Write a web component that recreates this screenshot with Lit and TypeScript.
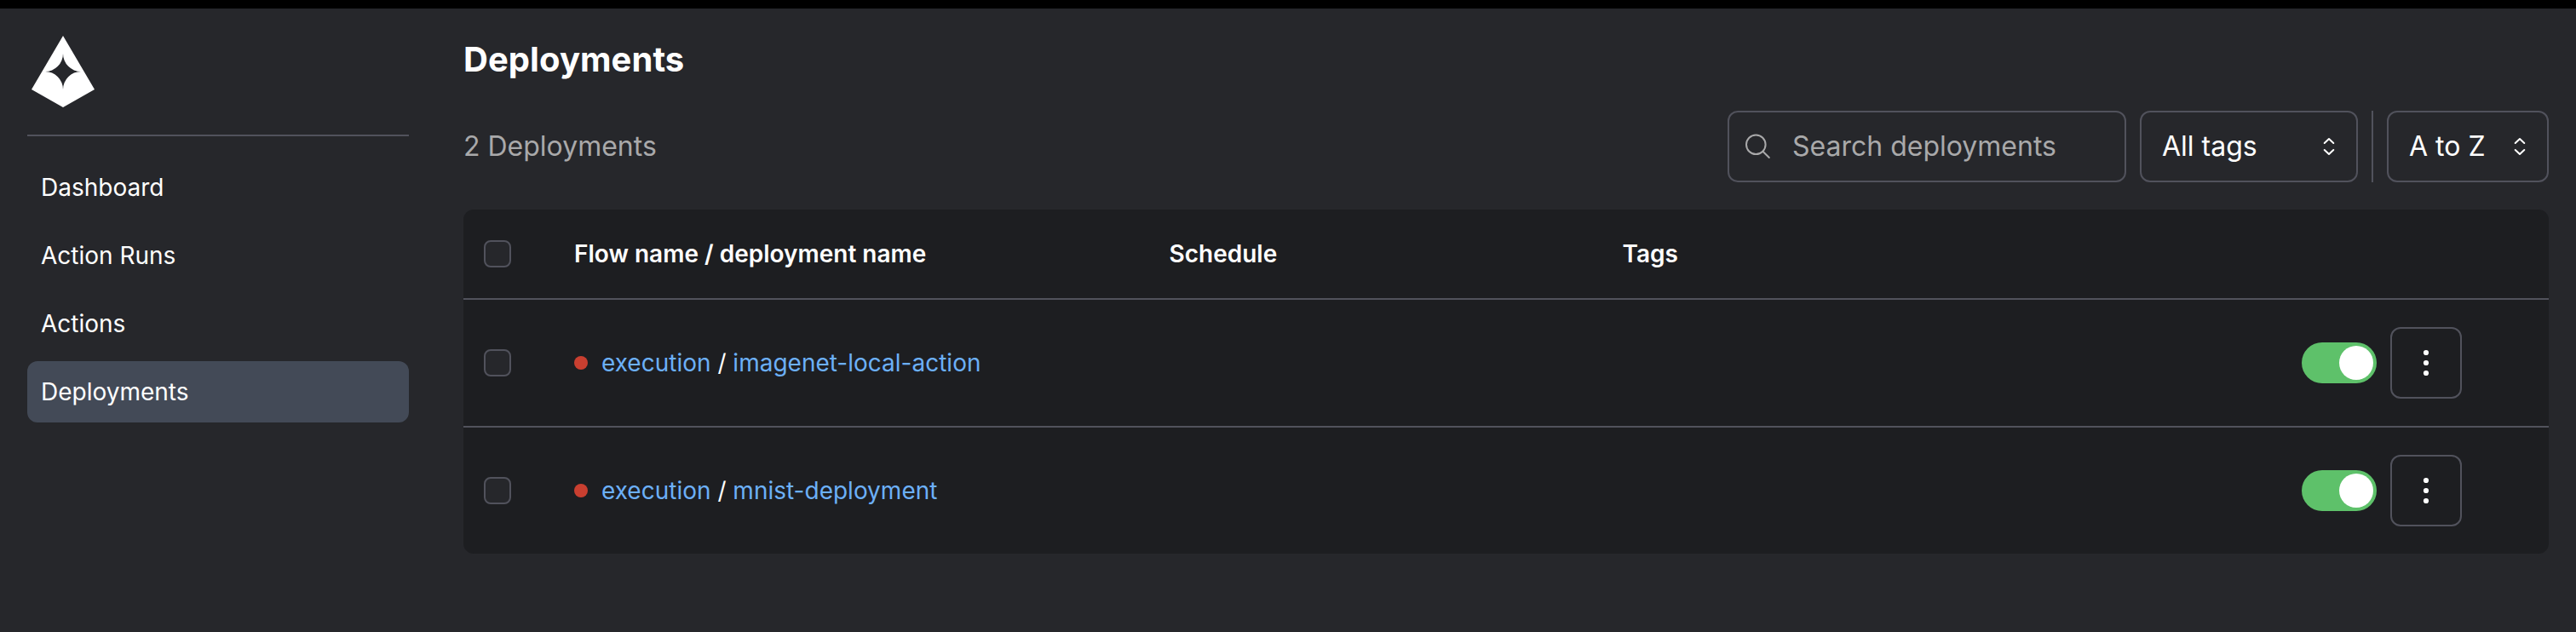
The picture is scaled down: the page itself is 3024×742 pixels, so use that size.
import { LitElement, html, css, svg } from "lit";
import { customElement, property } from "lit/decorators.js";

@customElement("app-checkbox")
class AppCheckbox extends LitElement {
  static styles = css`
    :host {
      display: block;
      box-sizing: border-box;
      width: 32px;
      height: 32px;
      border: 2px solid #51525c;
      border-radius: 8px;
      background: #26272b;
    }
  `;
  render() {
    return html``;
  }
}

@customElement("app-select")
class AppSelect extends LitElement {
  @property() label = "";
  static styles = css`
    :host {
      display: flex;
      box-sizing: border-box;
      align-items: center;
      justify-content: space-between;
      height: 84px;
      padding: 0 20px 0 24px;
      border: 2px solid #51525c;
      border-radius: 12px;
      color: #fff;
      font-size: 32px;
      line-height: 48px;
      white-space: nowrap;
    }
    svg {
      display: block;
      width: 24px;
      height: 24px;
    }
  `;
  render() {
    return html`<span>${this.label}</span>
      <svg viewBox="0 0 24 24" fill="none" stroke="#fff" stroke-width="2" stroke-linecap="round" stroke-linejoin="round">
        <path d="M6.7 8L12 3l5.3 5M6.7 16l5.3 5 5.3-5" />
      </svg>`;
  }
}

@customElement("app-sidebar")
class AppSidebar extends LitElement {
  static styles = css`
    :host {
      display: block;
      box-sizing: border-box;
      width: 512px;
      padding: 32px;
    }
    .brand {
      display: flex;
      height: 116px;
      padding-left: 5px;
      border-bottom: 2px solid #51525c;
    }
    .brand svg {
      display: block;
      width: 74px;
      height: 84px;
    }
    nav {
      display: flex;
      flex-direction: column;
      gap: 8px;
      margin-top: 24px;
    }
    a {
      padding: 0 16px;
      border-radius: 12px;
      color: #fff;
      font-size: 28px;
      line-height: 72px;
    }
    a.active {
      background: #434a57;
    }
  `;
  render() {
    const items = ["Dashboard", "Action Runs", "Actions", "Deployments"];
    return html`
      <div class="brand">
        <svg viewBox="0 0 74 84" fill="#fff" fill-rule="evenodd">
          <path d="M37 0L74 63L37 84L0 63ZM37 21A21 21 0 0 1 16 42A21 21 0 0 1 37 63A21 21 0 0 1 58 42A21 21 0 0 1 37 21Z" />
        </svg>
      </div>
      <nav>
        ${items.map((item) => html`<a class=${item === "Deployments" ? "active" : ""}>${item}</a>`)}
      </nav>
    `;
  }
}

@customElement("app-root")
class AppRoot extends LitElement {
  static styles = css`
    :host {
      display: flex;
      box-sizing: border-box;
      width: 100%;
      height: 742px;
      border-top: 10px solid #000;
      background: #26272b;
      color: #fff;
      font-family: Inter, sans-serif;
      overflow: hidden;
    }
    main {
      flex: 1;
      padding: 32px 32px 0;
    }
    h1 {
      margin: 0;
      font-size: 40px;
      font-weight: 700;
      line-height: 56px;
      letter-spacing: 0.06px;
    }
    .toolbar {
      display: flex;
      align-items: center;
      gap: 16px;
      margin-top: 32px;
    }
    .count {
      flex: 1;
      color: #a9a9aa;
      font-size: 32px;
      line-height: 48px;
    }
    .search {
      display: flex;
      box-sizing: border-box;
      align-items: center;
      gap: 24px;
      width: 468px;
      height: 84px;
      padding: 0 14px;
      border: 2px solid #51525c;
      border-radius: 12px;
      color: #a9a9aa;
      font-size: 32px;
      line-height: 48px;
    }
    .search svg {
      display: block;
      width: 36px;
      height: 36px;
    }
    .tags {
      width: 256px;
    }
    .sort {
      width: 190px;
    }
    .divider {
      width: 2px;
      height: 84px;
      background: #51525c;
    }
    .table {
      margin-top: 32px;
      border-radius: 12px;
      background: #1d1e21;
      font-size: 28px;
      line-height: 40px;
    }
    .row {
      display: grid;
      grid-template-columns: 106px 698.5px 532px 797.5px 1fr;
      align-items: center;
      height: 148px;
      padding-left: 24px;
      border-top: 2px solid #51525c;
    }
    .head {
      height: 104px;
      border-top: 0;
      font-weight: 600;
    }
    .name {
      display: flex;
      align-items: center;
      gap: 8px;
    }
    .dot {
      width: 16px;
      height: 16px;
      margin-right: 8px;
      border-radius: 50%;
      background: #c93f30;
    }
    .link {
      color: #6cb0f8;
    }
    .actions {
      display: flex;
      grid-column: 5;
      align-items: center;
      gap: 16px;
    }
    .toggle {
      display: flex;
      box-sizing: border-box;
      justify-content: flex-end;
      width: 88px;
      height: 48px;
      padding: 4px;
      border-radius: 24px;
      background: #5ec16a;
    }
    .knob {
      width: 40px;
      height: 40px;
      border-radius: 50%;
      background: #fff;
    }
    .more {
      display: flex;
      box-sizing: border-box;
      align-items: center;
      justify-content: center;
      width: 84px;
      height: 84px;
      border: 2px solid #51525c;
      border-radius: 12px;
    }
    .more svg {
      display: block;
      width: 40px;
      height: 40px;
    }
  `;

  private row(name: string) {
    return html`
      <div class="row">
        <app-checkbox></app-checkbox>
        <div class="name">
          <span class="dot"></span>
          <span><span class="link">execution</span> / <span class="link">${name}</span></span>
        </div>
        <div class="actions">
          <div class="toggle"><div class="knob"></div></div>
          <div class="more">
            <svg viewBox="0 0 40 40" fill="#fff">
              ${[8, 20, 32].map((y) => svg`<circle cx="20" cy=${y} r="3.1" />`)}
            </svg>
          </div>
        </div>
      </div>
    `;
  }

  render() {
    return html`
      <app-sidebar></app-sidebar>
      <main>
        <h1>Deployments</h1>
        <div class="toolbar">
          <div class="count">2 Deployments</div>
          <div class="search">
            <svg viewBox="0 0 36 36" fill="none" stroke="#a9a9aa" stroke-width="2" stroke-linecap="round">
              <circle cx="17.3" cy="15.8" r="11.3" />
              <path d="M25.4 23.8L32.8 31" />
            </svg>
            <span>Search deployments</span>
          </div>
          <app-select class="tags" label="All tags"></app-select>
          <div class="divider"></div>
          <app-select class="sort" label="A to Z"></app-select>
        </div>
        <div class="table">
          <div class="row head">
            <app-checkbox></app-checkbox>
            <div>Flow name / deployment name</div>
            <div>Schedule</div>
            <div>Tags</div>
          </div>
          ${this.row("imagenet-local-action")} ${this.row("mnist-deployment")}
        </div>
      </main>
    `;
  }
}
